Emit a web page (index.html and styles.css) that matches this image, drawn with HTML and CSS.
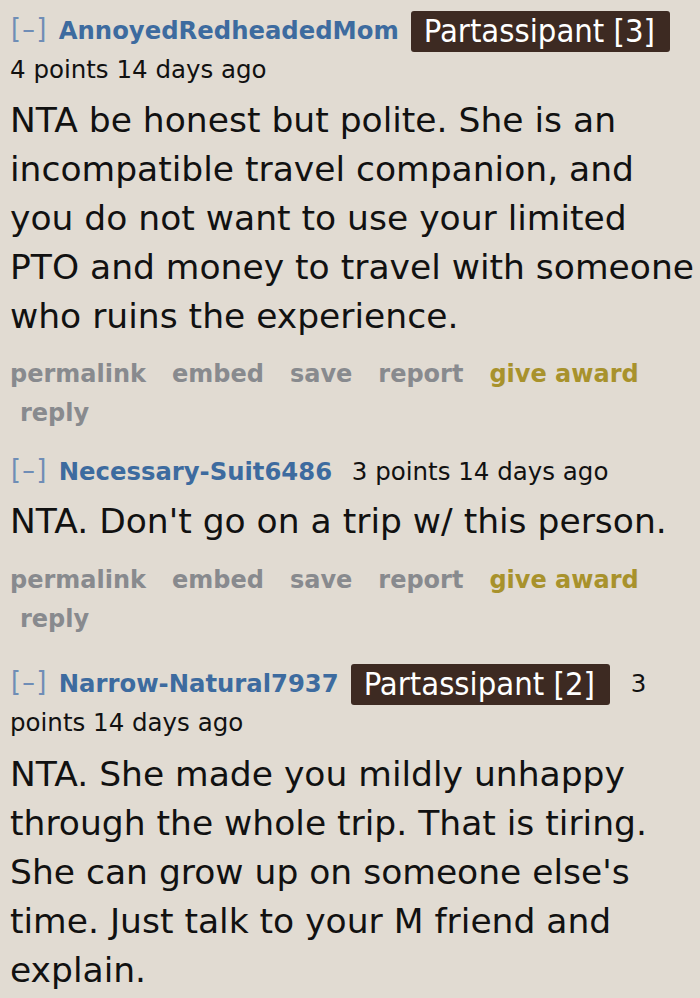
FILE: index.html
```html
<!DOCTYPE html>
<html>
<head>
<meta charset="utf-8">
<link rel="stylesheet" href="styles.css">
</head>
<body>
<div class="thread">
  <div class="comment c1">
    <p class="tagline"><span class="expand">[–]</span><a class="author">AnnoyedRedheadedMom</a><span class="flair">Partassipant [3]</span> <span class="score">4 points</span> <span class="time">14 days ago</span></p>
    <div class="md"><p>NTA be honest but polite. She is an incompatible travel companion, and you do not want to use your limited PTO and money to travel with someone who ruins the experience.</p></div>
    <ul class="buttons">
      <li>permalink</li>
      <li>embed</li>
      <li>save</li>
      <li>report</li>
      <li class="award">give award</li>
      <li>reply</li>
    </ul>
  </div>
  <div class="comment c2">
    <p class="tagline"><span class="expand">[–]</span><a class="author">Necessary-Suit6486</a> <span class="score">3 points</span> <span class="time">14 days ago</span></p>
    <div class="md"><p>NTA. Don't go on a trip w/ this person.</p></div>
    <ul class="buttons">
      <li>permalink</li>
      <li>embed</li>
      <li>save</li>
      <li>report</li>
      <li class="award">give award</li>
      <li>reply</li>
    </ul>
  </div>
  <div class="comment c3">
    <p class="tagline"><span class="expand">[–]</span><a class="author">Narrow-Natural7937</a><span class="flair">Partassipant [2]</span> <span class="score">3 points</span> <span class="time">14 days ago</span></p>
    <div class="md"><p>NTA. She made you mildly unhappy through the whole trip. That is tiring. She can grow up on someone else's time. Just talk to your M friend and explain.</p></div>
  </div>
</div>
</body>
</html>
```
FILE: styles.css
```css
html, body {
  margin: 0;
  padding: 0;
  background: #e1dbd2;
}
body {
  font-family: "DejaVu Sans", Verdana, sans-serif;
  color: #111;
  width: 700px;
  height: 998px;
  overflow: hidden;
}
.thread {
  padding: 0 4px 0 10px;
}
.comment {
  margin: 0;
}
.tagline {
  margin: 0;
  font-size: 24.5px;
  line-height: 36px;
}
.c1 .tagline { padding-top: 11px; }
.c2 .tagline { padding-top: 20px; }
.c3 .tagline { padding-top: 25px; }
.expand {
  font-family: "DejaVu Sans Condensed", sans-serif;
  font-size: 28px;
  letter-spacing: 1.5px;
  color: #6f8db6;
  margin-left: 1px;
  margin-right: 11px;
}
.author {
  font-weight: bold;
  color: #3d6b9f;
  font-size: 24.3px;
  margin-right: 12px;
}
.flair {
  display: inline-block;
  font-family: "DejaVu Sans Condensed", sans-serif;
  font-size: 32.5px;
  line-height: 33px;
  padding: 4px 15px 4px 13px;
  background: #3d2a22;
  color: #fff;
  border-radius: 3px;
  margin-right: 13px;
  vertical-align: middle;
}
.md p {
  margin: 0;
  font-size: 34.5px;
  line-height: 49px;
}
.c1 .md { margin-top: 8px; }
.c2 .md { margin-top: 7px; }
.c3 .md { margin-top: 9px; }
.buttons {
  list-style: none;
  margin: 14px 0 0;
  padding: 0;
  display: flex;
  flex-wrap: wrap;
  column-gap: 26px;
  row-gap: 0;
  font-size: 24px;
  line-height: 39px;
  font-weight: bold;
  color: #888a8e;
}
.c2 .buttons { margin-top: 15px; }
.buttons li:last-child {
  padding-left: 10px;
}
.buttons .award {
  color: #a8922c;
}
```
